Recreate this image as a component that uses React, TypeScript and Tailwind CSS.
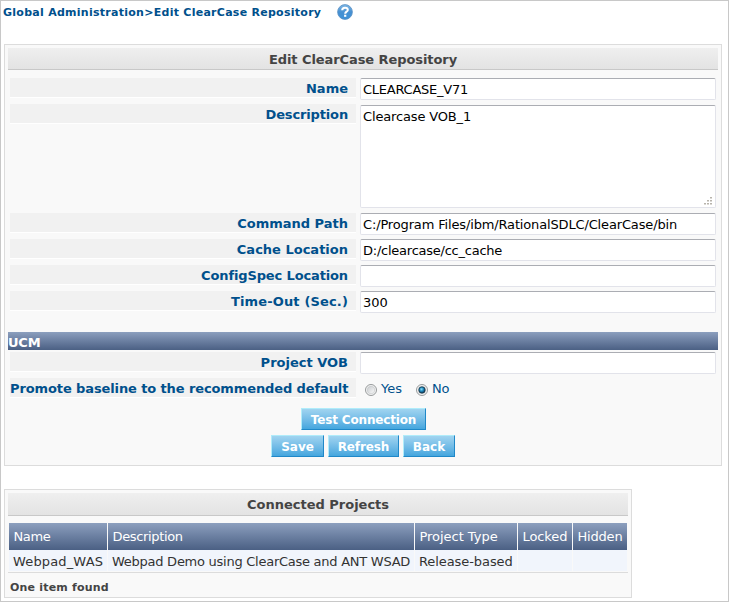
import type { ReactNode } from "react";

const LABEL = "h-5 w-[346px] shrink-0 border-b border-white bg-[#f1f1f1] pr-[8px] text-right text-[13px] leading-[21px] font-bold whitespace-nowrap text-[#00508c]";
const FIELD = "block w-[356px] rounded-[2px] border border-[#e2e3ea] border-t-[#abadb3] bg-white pl-[2px] text-[13px] text-black outline-none";
const HEADING = "flex h-[22px] items-center justify-center border-b border-[#c8c8c8] bg-linear-to-b from-[#efefef] to-[#e3e3e3] pt-[2px] text-[13px] font-bold text-[#444]";

function Row({ label, labelClass = "", children }: { label: string; labelClass?: string; children: ReactNode }) {
  return (
    <div className="flex min-h-[22px] items-start gap-1">
      <div className={`${LABEL} ${labelClass}`}>{label}</div>
      {children}
    </div>
  );
}

function Field({ value, className = "" }: { value: string; className?: string }) {
  return <input defaultValue={value} className={`${FIELD} h-[22px] pt-[1px] ${className}`} />;
}

function Button({ children, className }: { children: string; className: string }) {
  return (
    <button className={`h-[22px] border border-t-[#b0ecfa] border-r-[#2088c8] border-b-[#2088c8] border-l-[#b0ecfa] bg-linear-to-b from-[#a0d4f0] to-[#44a6de] pt-px text-[12px] leading-5 font-bold whitespace-nowrap text-white ${className}`}>
      {children}
    </button>
  );
}

function Radio({ checked = false }: { checked?: boolean }) {
  return (
    <svg width="12" height="12" viewBox="0 0 12 12" className="mt-[2px] shrink-0">
      <defs>
        <linearGradient id="radioFace" x1="0" y1="0" x2="1" y2="1">
          <stop offset="0" stopColor="#c8cbce" />
          <stop offset="1" stopColor="#fbfbfb" />
        </linearGradient>
        <radialGradient id="radioDot" cx="0.42" cy="0.38" r="0.6">
          <stop offset="0" stopColor="#8fdcf8" />
          <stop offset="0.5" stopColor="#1e8cc0" />
          <stop offset="1" stopColor="#0d3a5e" />
        </radialGradient>
      </defs>
      <circle cx="6" cy="6" r="5.5" fill="#f6f6f6" stroke="#8b8e90" strokeWidth="0.9" />
      <circle cx="6" cy="6" r="3.8" fill="url(#radioFace)" stroke="#bfc2c5" strokeWidth="0.6" />
      {checked && <circle cx="6" cy="6" r="3.2" fill="url(#radioDot)" stroke="#14303f" strokeWidth="0.7" />}
    </svg>
  );
}

function HelpIcon() {
  return (
    <svg width="16" height="16" viewBox="0 0 16 16">
      <defs>
        <linearGradient id="help" x1="0" y1="0" x2="0" y2="1">
          <stop offset="0" stopColor="#82b9e6" />
          <stop offset="0.5" stopColor="#4690d2" />
          <stop offset="1" stopColor="#3d92d8" />
        </linearGradient>
      </defs>
      <circle cx="8" cy="8" r="7.4" fill="url(#help)" stroke="#5b91c4" strokeWidth="0.8" />
      <path d="M5.2 6.2C5.2 4.4 6.4 3.7 8 3.7s2.8.8 2.8 2.2c0 1.8-2.6 1.7-2.6 3.8" fill="none" stroke="#fff" strokeWidth="2" />
      <rect x="7.1" y="10.7" width="2.2" height="2.1" fill="#fff" />
    </svg>
  );
}

const HEAD = "h-[27px] bg-linear-to-b from-[#8c9fbe] to-[#4b6084] pl-[4.5px] leading-[27px] whitespace-nowrap text-white";
const CELL = "h-[21px] bg-[#f1f5fc] pl-1 leading-[23px] whitespace-nowrap text-[#333]";

export default function App() {
  return (
    <div className="h-[602px] w-[729px] overflow-hidden border border-[#c8c8c8] bg-white pl-[3px] font-['DejaVu_Sans',Verdana,sans-serif] text-[13px]">
      <header className="-ml-px flex h-[43px] items-start pt-[3px]">
        <span className="w-[334px] pt-px text-[11px] leading-4 font-bold tracking-[0.27px] whitespace-nowrap text-[#00508c]">Global Administration&gt;Edit ClearCase Repository</span>
        <HelpIcon />
      </header>

      <section className="h-[422px] w-[718px] border border-[#dcdcdc] bg-[#f9f9f9] p-[3px]">
        <h1 className={`${HEADING} tracking-[-0.08px]`}>Edit ClearCase Repository</h1>
        <div className="mt-2 flex flex-col gap-1 px-[2px]">
          <Row label="Name"><Field value="CLEARCASE_V71" className="tracking-[-0.25px]" /></Row>
          <Row label="Description" labelClass="tracking-[-0.15px]">
            <div className="relative mt-px mb-px">
              <textarea defaultValue="Clearcase VOB_1" className={`${FIELD} h-[103px] resize-none pt-[3px] leading-4 tracking-[-0.15px]`} />
              <svg width="8" height="8" viewBox="0 0 8 8" fill="#b8b4ac" className="absolute right-[4px] bottom-[3px]">
                <path d="M6 0h2v1.5H6zM3 3h2v1.5H3zM6 3h2v1.5H6zM0 6h2v1.5H0zM3 6h2v1.5H3zM6 6h2v1.5H6z" />
              </svg>
            </div>
          </Row>
          <Row label="Command Path"><Field value="C:/Program Files/ibm/RationalSDLC/ClearCase/bin" className="tracking-[-0.15px]" /></Row>
          <Row label="Cache Location"><Field value="D:/clearcase/cc_cache" className="tracking-[-0.24px]" /></Row>
          <Row label="ConfigSpec Location" labelClass="tracking-[-0.13px]"><Field value="" /></Row>
          <Row label="Time-Out (Sec.)" labelClass="tracking-[0.15px]"><Field value="300" /></Row>
        </div>
        <h2 className="mt-[19px] h-[18px] bg-linear-to-b from-[#8c9fbe] to-[#4b6084] text-[13px] leading-[21px] font-bold tracking-[-0.2px] text-white">UCM</h2>
        <div className="mt-[2px] flex flex-col gap-1 px-[2px]">
          <Row label="Project VOB"><Field value="" /></Row>
          <Row label="Promote baseline to the recommended default" labelClass="tracking-[-0.11px]">
            <div className="flex h-[22px] items-center pl-[5px] text-[#00508c]">
              <Radio />
              <span className="ml-1 w-[35px]">Yes</span>
              <Radio checked />
              <span className="ml-1 tracking-[-0.3px]">No</span>
            </div>
          </Row>
        </div>
        <div className="mt-2 ml-[293px]"><Button className="w-[125px] tracking-[-0.15px]">Test Connection</Button></div>
        <div className="mt-[5px] ml-[263px] flex gap-1">
          <Button className="w-[53px]">Save</Button>
          <Button className="w-[71px] tracking-[-0.1px]">Refresh</Button>
          <Button className="w-[52px]">Back</Button>
        </div>
      </section>

      <section className="mt-[23px] h-[109px] w-[628px] border border-[#dcdcdc] bg-[#f9f9f9] p-[3px]">
        <h1 className={`${HEADING} h-[23px]`}>Connected Projects</h1>
        <div className="mt-[7px] grid grid-cols-[98px_306px_102px_54px_54px] gap-x-px border-b border-[#dcdcdc] px-px pb-px">
          <div className={`${HEAD} tracking-[-0.4px]`}>Name</div>
          <div className={`${HEAD} tracking-[-0.35px]`}>Description</div>
          <div className={`${HEAD} tracking-[-0.03px]`}>Project Type</div>
          <div className={`${HEAD} tracking-[-0.1px]`}>Locked</div>
          <div className={`${HEAD} tracking-[-0.2px]`}>Hidden</div>
          <div className={`${CELL} tracking-[0.15px]`}>Webpad_WAS</div>
          <div className={`${CELL} tracking-[-0.26px]`}>Webpad Demo using ClearCase and ANT WSAD</div>
          <div className={`${CELL} tracking-[-0.08px]`}>Release-based</div>
          <div className={CELL} />
          <div className={CELL} />
        </div>
        <p className="mt-[6px] pt-px pl-[2px] text-[11px] leading-4 font-bold tracking-[0.2px] text-[#444]">One item found</p>
      </section>
    </div>
  );
}
